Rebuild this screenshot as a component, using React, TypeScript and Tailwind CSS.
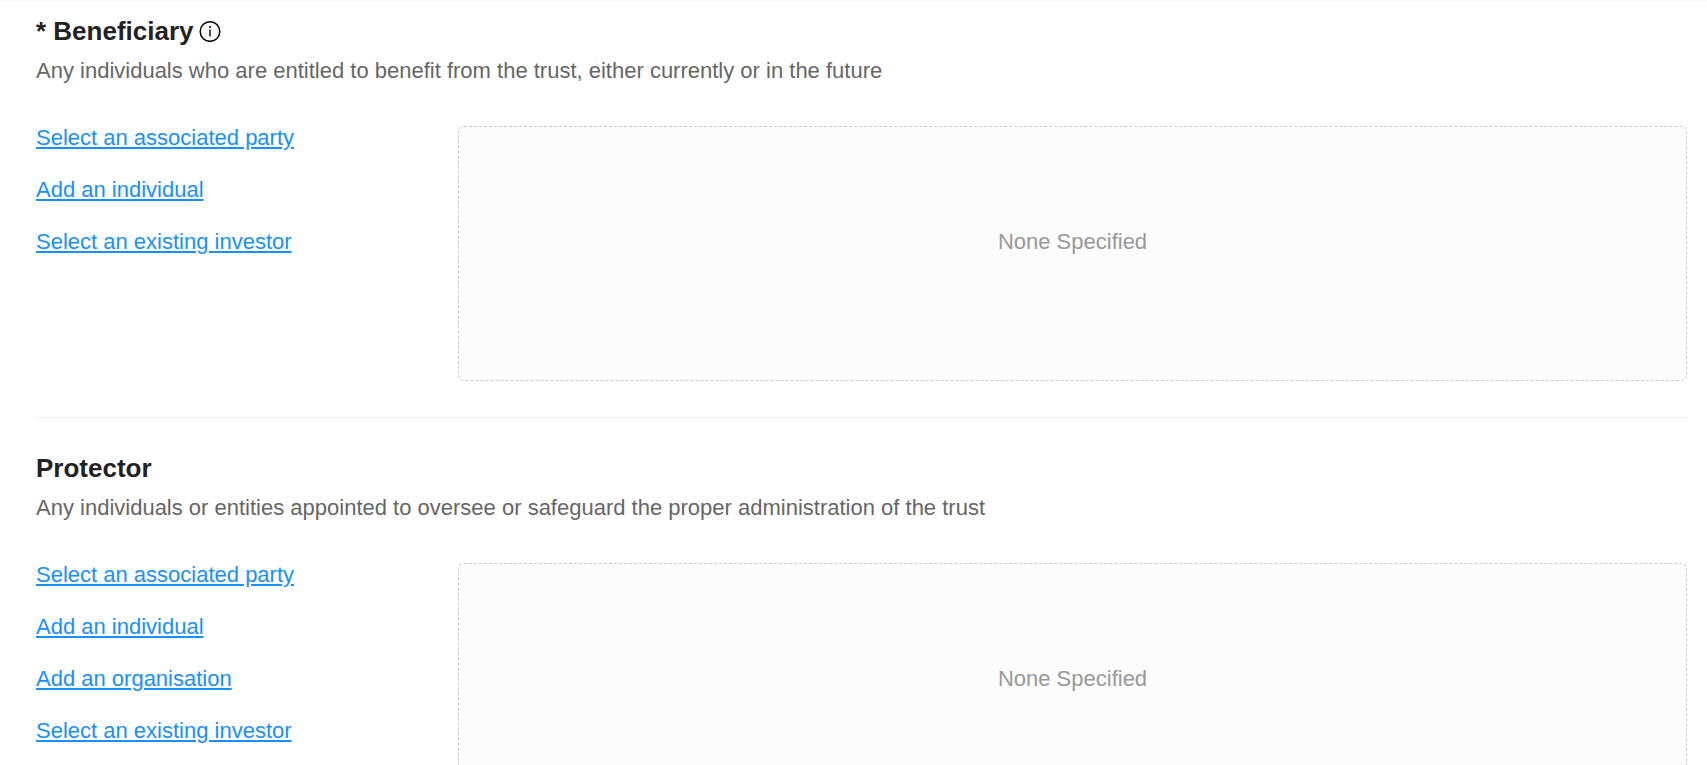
import { clsx } from 'clsx';

interface Party {
  id: string;
  title: string;
  description: string;
  required?: boolean;
  hasInfo?: boolean;
  actions: string[];
}

const parties: Party[] = [
  {
    id: 'beneficiary',
    title: 'Beneficiary',
    description: 'Any individuals who are entitled to benefit from the trust, either currently or in the future',
    required: true,
    hasInfo: true,
    actions: ['Select an associated party', 'Add an individual', 'Select an existing investor'],
  },
  {
    id: 'protector',
    title: 'Protector',
    description: 'Any individuals or entities appointed to oversee or safeguard the proper administration of the trust',
    actions: ['Select an associated party', 'Add an individual', 'Add an organisation', 'Select an existing investor'],
  },
];

function InfoIcon() {
  return (
    <svg className="h-[22px] w-[22px]" viewBox="0 0 22 22" fill="none" aria-hidden="true">
      <circle cx="11" cy="11.5" r="9.8" stroke="black" strokeWidth="1.5" />
      <circle cx="11" cy="7" r="1" fill="black" />
      <path d="M11 9.5v7" stroke="black" strokeWidth="1.4" />
    </svg>
  );
}

function PartySection({ party, isFirst }: { party: Party; isFirst: boolean }) {
  return (
    <section
      aria-labelledby={party.id}
      className={clsx('pb-9', isFirst ? 'pt-[11px]' : 'border-t border-[#f0f0f0] pt-8')}
    >
      <div className="flex items-center gap-[5px]">
        <h2 id={party.id} className="text-[26px] leading-[36px] font-bold text-[#222222]">
          {party.required && '* '}
          {party.title}
        </h2>
        {party.hasInfo && (
          <button type="button" aria-label={`About ${party.title}`} className="cursor-pointer">
            <InfoIcon />
          </button>
        )}
      </div>
      <p className="mt-1 text-[22px] leading-[36px] text-[#666666]">{party.description}</p>

      <div className="mt-[37px] flex">
        <ul className="flex w-[422px] shrink-0 flex-col gap-7">
          {party.actions.map((action) => (
            <li key={action} className="text-[22px] leading-[24px]">
              <a href="#" className="text-[#1890ff] underline">
                {action}
              </a>
            </li>
          ))}
        </ul>
        <div className="min-h-[255px] flex-1 rounded-md border border-dashed border-[#cccccc] bg-[#fcfcfc] pt-[97px] text-center text-[22px] leading-[36px] text-[#999999]">
          None Specified
        </div>
      </div>
    </section>
  );
}

export default function App() {
  return (
    <main className="h-screen overflow-hidden border-t-2 border-[#fafafa] bg-white pr-5 pl-9 font-['Liberation_Sans',Arial,sans-serif]">
      {parties.map((party, index) => (
        <PartySection key={party.id} party={party} isFirst={index === 0} />
      ))}
    </main>
  );
}
